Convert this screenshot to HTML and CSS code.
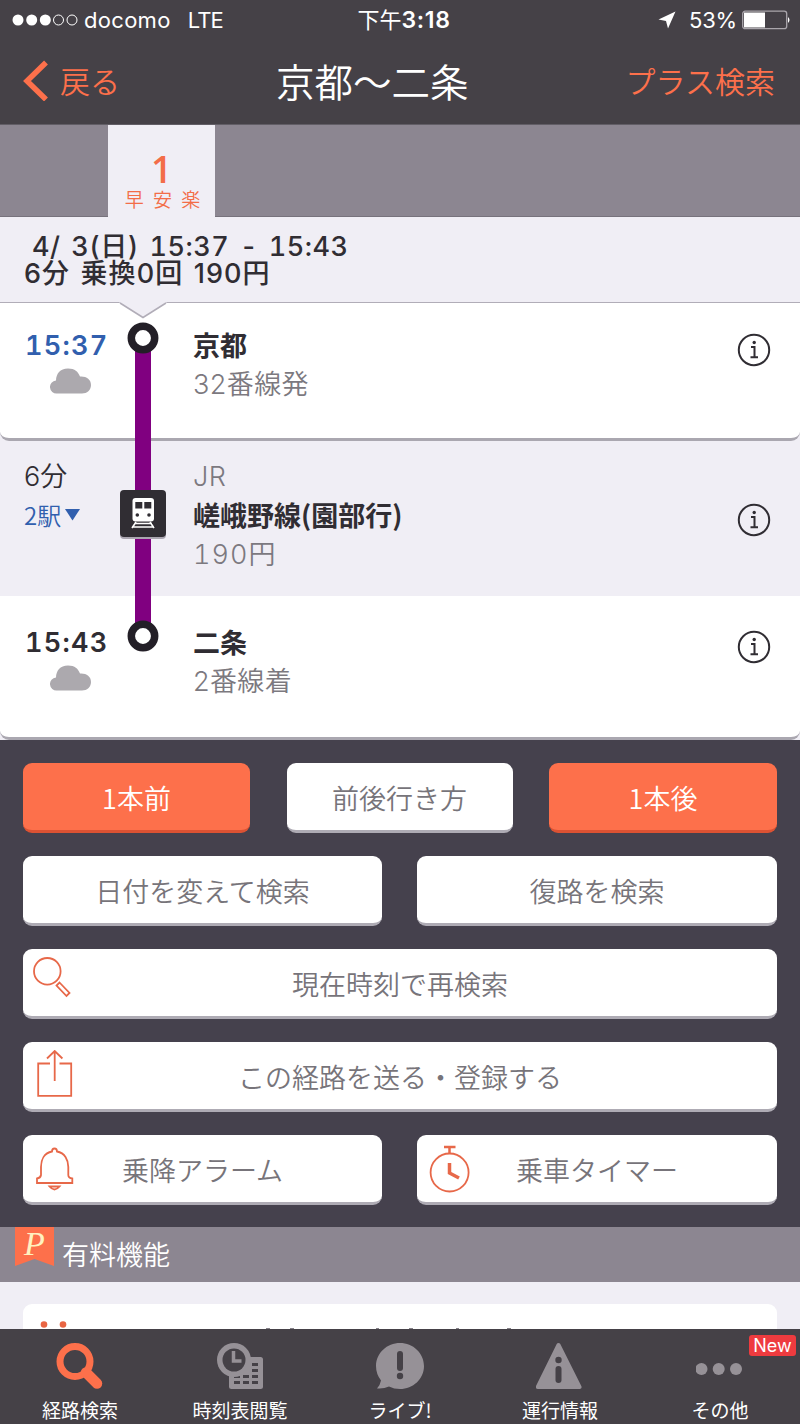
FILE: index.html
```html
<!DOCTYPE html>
<html lang="ja">
<head>
<meta charset="UTF-8">
<meta name="viewport" content="width=device-width, initial-scale=1.0">
<title>京都〜二条</title>
<link rel="stylesheet" href="styles.css">
</head>
<body>
<header class="header">
  <div class="status">
    <div class="carrier">
      <svg width="66" height="14" viewBox="0 0 66 14"><g fill="#fff"><circle cx="6" cy="7" r="5.5"/><circle cx="19.700" cy="7" r="5.500"/><circle cx="33.300" cy="7" r="5.500"/></g><g fill="none" stroke="#fff"><circle cx="46.500" cy="7" r="5"/><circle cx="60" cy="7" r="5"/></g></svg>
      <span class="docomo">docomo</span><span class="lte">LTE</span>
    </div>
    <div class="clock">下午<b>3:18</b></div>
    <div class="power">
      <svg width="18" height="18" viewBox="0 0 18 18"><path d="M17.500 .5L.5 8.500L8 10L10 17.500Z" fill="#fff"/></svg>
      <span class="percent">53%</span>
      <svg width="48" height="20" viewBox="0 0 48 20"><rect x=".7" y="1.200" width="44" height="17.500" rx="2.500" fill="none" stroke="#aaa6ac" stroke-width="1.300"/><path d="M2 2.500h21v15H2z" fill="#fff"/><path d="M46 7q3 3 0 6z" fill="#fff"/></svg>
    </div>
  </div>
  <nav class="nav">
    <a class="back"><svg width="26" height="42" viewBox="0 0 26 42"><path d="M24 3.500L5 22L24 40.500" fill="none" stroke="#fd704b" stroke-width="5.500"/></svg><span>戻る</span></a>
    <h1>京都〜二条</h1>
    <a class="plus">プラス検索</a>
  </nav>
</header>

<div class="tabs">
  <div class="tab"><span class="num">1</span><span class="tags">早 安 楽</span></div>
</div>

<section class="summary">
  <p class="when">4/ 3(日) 15:37 - 15:43</p>
  <p class="cost">6分 乗換0回 190円</p>
</section>

<section class="route">
  <div class="row first">
    <svg class="notch" width="48" height="17" viewBox="0 0 48 17"><path d="M0 0L2 1.500L24 15.500L46 1.500L48 0Z" fill="#f0eef5"/><path d="M1 1L24 15.500L47 1" fill="none" stroke="#b1adb8" stroke-width="1.500"/></svg>
    <div class="time">
      <b class="blue">15:37</b>
      <svg class="cloud" width="42" height="26" viewBox="0 0 42 26"><path d="M7 25.500a6.500 6.500 0 0 1-1-13C6 6 10 .5 18 .5c7 0 10 3 12 8C36 8 41 11 41 17c0 5-4 8.500-9 8.500z" fill="#aca9ae"/></svg>
    </div>
    <svg class="rail" width="46" height="138" viewBox="0 0 46 138"><path d="M15 36h16v102H15z" fill="#800080"/><circle cx="23" cy="35" r="11.700" fill="#fff" stroke="#231f27" stroke-width="7.500"/></svg>
    <div class="place"><b>京都</b><span>32番線発</span></div>
    <svg class="info" width="34" height="34" viewBox="0 0 34 34"><circle cx="17" cy="17" r="15.200"/><path d="M14 14h3.500v10M13.500 24.200h7.500"/><circle class="dot" cx="17.200" cy="9.500" r="1.700"/></svg>
  </div>
  <div class="row ride">
    <div class="time"><span class="min">6分</span><span class="stops">2駅<svg width="15" height="12" viewBox="0 0 15 12"><path d="M0 0h15L7.500 11.500z" fill="#315fae"/></svg></span></div>
    <svg class="rail" width="46" height="155" viewBox="0 0 46 155"><path d="M15 0h16v155H15z" fill="#800080"/><rect y="51" width="46" height="47" rx="4" fill="#aaa5b0"/><rect y="49" width="46" height="47" rx="4" fill="#302d33"/><rect x="12.500" y="57" width="21.500" height="23.500" rx="3" fill="#fff"/><path d="M15.300 61h7v6.500h-7zM24.300 61h7v6.500h-7z" fill="#302d33"/><circle cx="17.300" cy="74" r="1.800" fill="#302d33"/><circle cx="29" cy="74" r="1.800" fill="#302d33"/><path d="M16 81l-4 6M30 81l4 6M15 82.500h17M12 86h22" stroke="#fff" stroke-width="1.600"/></svg>
    <div class="place"><span>JR</span><b>嵯峨野線(園部行)</b><span class="fare">190円</span></div>
    <svg class="info" width="34" height="34" viewBox="0 0 34 34"><circle cx="17" cy="17" r="15.200"/><path d="M14 14h3.500v10M13.500 24.200h7.500"/><circle class="dot" cx="17.200" cy="9.500" r="1.700"/></svg>
  </div>
  <div class="row last">
    <div class="time">
      <b>15:43</b>
      <svg class="cloud" width="42" height="26" viewBox="0 0 42 26"><path d="M7 25.500a6.500 6.500 0 0 1-1-13C6 6 10 .5 18 .5c7 0 10 3 12 8C36 8 41 11 41 17c0 5-4 8.500-9 8.500z" fill="#aca9ae"/></svg>
    </div>
    <svg class="rail" width="46" height="60" viewBox="0 0 46 60"><path d="M15 0h16v38H15z" fill="#800080"/><circle cx="23" cy="40" r="11.700" fill="#fff" stroke="#231f27" stroke-width="7.500"/></svg>
    <div class="place"><b>二条</b><span>2番線着</span></div>
    <svg class="info" width="34" height="34" viewBox="0 0 34 34"><circle cx="17" cy="17" r="15.200"/><path d="M14 14h3.500v10M13.500 24.200h7.500"/><circle class="dot" cx="17.200" cy="9.500" r="1.700"/></svg>
  </div>
</section>

<section class="actions">
  <div class="three">
    <button class="btn orange">1本前</button>
    <button class="btn">前後行き方</button>
    <button class="btn orange">1本後</button>
  </div>
  <div class="two">
    <button class="btn">日付を変えて検索</button>
    <button class="btn">復路を検索</button>
  </div>
  <button class="btn wide"><svg class="icon" width="48" height="48" viewBox="0 0 48 48"><circle cx="17.300" cy="14.300" r="13.300"/><path d="M29.500 25.500L39.500 36L36.500 39L26.500 28.500z"/></svg><span>現在時刻で再検索</span></button>
  <button class="btn wide"><svg class="icon" width="48" height="52" viewBox="0 0 48 52"><path d="M20 13.500H8.200v32.300h33V13.500H29.500M24.700 31V1M17 8.500L24.700 1L32.400 8.500"/></svg><span>この経路を送る・登録する</span></button>
  <div class="two">
    <button class="btn iconed"><svg class="icon" width="48" height="52" viewBox="0 0 48 52"><path d="M22 8.500q0-3 2.500-3t2.500 3C35 10 38.300 17 38.300 24v8q0 3 4 3.500v4.500H7v-4.500Q10.500 35 11 32v-8C11 17 14 10 22 8.500zM19.500 43.500h10q-5 6-10 0z"/></svg><span>乗降アラーム</span></button>
    <button class="btn iconed"><svg class="icon" width="48" height="52" viewBox="0 0 48 52"><circle cx="25.600" cy="29.500" r="19"/><path d="M25.500 10V5M20 4h11.500" stroke-width="2.500"/><path d="M25.500 20v10L35 35" stroke-width="3.500"/></svg><span>乗車タイマー</span></button>
  </div>
</section>

<section class="paid">
  <h2><span class="ribbon">P</span>有料機能</h2>
  <div class="paid-body">
    <div class="paid-card"><svg width="754" height="25" viewBox="0 0 754 25"><circle cx="21" cy="20.500" r="3.300" fill="#e96543"/><circle cx="40" cy="20.500" r="3.300" fill="#e96543"/><path d="M243 24.500h4M267 24.500h4M353 24.500h3M386 24.500h4M433 24.500h3M484 24.500h4" stroke="#858188"/></svg></div>
  </div>
</section>

<footer class="tabbar">
  <a><svg width="48" height="48" viewBox="0 0 48 48"><circle cx="19" cy="19.500" r="15" fill="none" stroke="#fd704b" stroke-width="7"/><path d="M30 30.500L41 41.500" stroke="#fd704b" stroke-width="10.500" stroke-linecap="round"/></svg><span>経路検索</span></a>
  <a><svg width="48" height="48" viewBox="0 0 48 48"><rect x="13" y="15" width="34" height="32" rx="2.500" fill="#969197"/><path d="M36 22.500h6M36 28.500h6M18 34.500h6M27 34.500h6M36 34.500h6M18 40.500h6M27 40.500h6M36 40.500h6" stroke="#454147" stroke-width="3"/><circle cx="18" cy="18" r="17" fill="#969197"/><circle cx="18" cy="18" r="11.500" fill="#454147"/><path d="M17.500 9v10h8" fill="none" stroke="#969197" stroke-width="3.500"/></svg><span>時刻表閲覧</span></a>
  <a><svg width="48" height="48" viewBox="0 0 48 48"><path d="M24 1c13 0 24 10 24 23S37 47 24 47q-6 0-11-2.500Q8 47 1 46.500q3-3 4-8Q0 32 0 24C0 11 11 1 24 1z" fill="#969197"/><path d="M24 12v14" stroke="#454147" stroke-width="6" stroke-linecap="round"/><circle cx="24" cy="34" r="3.200" fill="#454147"/></svg><span>ライブ!</span></a>
  <a><svg width="48" height="48" viewBox="0 0 48 48"><path d="M22.500 3L43.500 45H1.800z" fill="#969197" stroke="#969197" stroke-width="4" stroke-linejoin="round"/><circle cx="22.500" cy="18" r="3.200" fill="#454147"/><path d="M22.500 27v11" stroke="#454147" stroke-width="6" stroke-linecap="round"/></svg><span>運行情報</span></a>
  <a><svg width="48" height="48" viewBox="0 0 48 48"><g fill="#969197"><circle cx="5.500" cy="27" r="6"/><circle cx="22.700" cy="27" r="6"/><circle cx="40" cy="27" r="6"/></g></svg><span>その他</span><em class="new">New</em></a>
</footer>
</body>
</html>
```
FILE: styles.css
```css
* { box-sizing: border-box; }
body { margin: 0; width: 800px; height: 1424px; overflow: hidden; background: #45414d;
font-family: "Noto Sans CJK JP", sans-serif; font-weight: 350; font-size: 27px; color: #302d33; }
h1, h2, p { margin: 0; font-weight: 350; }
svg { display: block; flex: none; }

.header { height: 125px; background: #454147; color: #fff; border-bottom: 1px solid #625e66; }
.status { display: grid; grid-template-columns: 1fr 1fr 1fr; height: 40px; align-items: center;
padding: 0 10px 0 12px; font: 400 22px/40px Inter, "Noto Sans CJK JP", sans-serif; }
.carrier, .power { display: flex; align-items: center; }
.docomo { margin-left: 6px; letter-spacing: .3px; }
.lte { margin-left: 17px; letter-spacing: -.8px; }
.clock { text-align: center; padding-left: 6px; }
.clock b { font-weight: 600; font-size: 23px; letter-spacing: .7px; }
.power { justify-content: flex-end; }
.percent { margin: 0 5px 0 13px; letter-spacing: -.2px; }
.nav { display: grid; grid-template-columns: 254px auto 1fr; align-items: center; height: 80px;
padding: 0 25px 0 22px; }
.nav h1 { font-size: 38.500px; line-height: 80px; }
.back { display: flex; align-items: center; gap: 12px; color: #fd704b; font-size: 30px; line-height: 80px; }
.plus { color: #fd704b; font-size: 30px; line-height: 80px; text-align: right; }

.tabs { height: 92px; background: #8c8691; padding-left: 108px; border-bottom: 1px solid #77727c; }
.tab { display: flex; flex-direction: column; align-items: center; width: 107px; height: 92px;
background: #f0eef5; color: #f36d48; padding-top: 29px; }
.num { font: 600 37px/30px "Open Sans", sans-serif; }
.tags { font-size: 19px; line-height: 19px; word-spacing: 5px; padding: 5px 0 0 2px; }

.summary { height: 86px; background: #f0eef5; border-bottom: 1px solid #b1adb8;
padding: 16px 24px; line-height: 27px; }
.when, .cost { font-family: Inter, "Noto Sans CJK JP", sans-serif; font-weight: 500; white-space: nowrap; }
.when { padding-left: 8px; font-variant-numeric: tabular-nums; letter-spacing: .5px; word-spacing: 3px; }
.cost { letter-spacing: 1.100px; word-spacing: 2px; }

.route { background: #f0eef5; }
.row { display: grid; grid-template-columns: 120px 46px 1fr 34px; align-items: start; position: relative;
padding-right: 29px; background: #fff; }
.first { height: 138px; padding-top: 22px; border-bottom: 3px solid #aaa7b0; border-radius: 0 0 9px 9px; }
.ride { height: 155px; padding-top: 15px; background: #f0eef5; }
.last { height: 144px; padding-top: 26px; border-bottom: 3px solid #aaa7b0; border-radius: 0 0 9px 9px; }
.notch { position: absolute; left: 119px; top: -1px; z-index: 2; }
.rail { position: absolute; left: 120px; top: 0; z-index: 1; }
.time { grid-column: 1; padding-left: 24px; line-height: 39px; }
.time b { display: block; padding-left: 1px; font: 600 27px/41px Inter, sans-serif; font-variant-numeric: tabular-nums; letter-spacing: 1.300px; }
.blue { color: #315fae; }
.cloud { margin: 2px 0 0 26px; }
.min, .place span { height: 39px; padding-top: 1px; font-family: Inter, "Noto Sans CJK JP", sans-serif; font-weight: 350; }
.min { display: block; }
.stops { display: flex; align-items: center; gap: 4px; color: #315fae; font-size: 24px; }
.place { grid-column: 3; padding-left: 27px; line-height: 39px; }
.place b, .place span { display: block; }
.place b { font-weight: 700; }
.place span { color: #7c797f; letter-spacing: .4px; }
.place .fare { font-variant-numeric: tabular-nums; letter-spacing: 1px; }
.info { grid-column: 4; margin-top: 8px; fill: none; stroke: #302d33; stroke-width: 2; }
.info .dot { fill: #302d33; stroke: none; }
.ride .info { margin-top: 47px; }

.actions { display: flex; flex-direction: column; gap: 23px; height: 487px; padding: 23px 23px 0; }
.three { display: grid; grid-template-columns: 227px 226px 228px; justify-content: space-between; }
.two { display: grid; grid-template-columns: 359px 360px; justify-content: space-between; }
.btn { display: block; position: relative; height: 70px; padding: 1px 0 0; border: 0; border-bottom: 3px solid #aeabb4;
border-radius: 9px; background: #fff; color: #77747a; font: inherit; text-align: center; }
.orange { background: #fd704b; color: #fff; border-color: #dc5233; }
.icon { position: absolute; left: 7px; top: 8px; fill: none; stroke: #e76849; stroke-width: 1.800; }

.paid h2 { display: flex; height: 55px; background: #8c8691; color: #fff; padding-left: 15px;
font-size: 27px; line-height: 53px; gap: 8px; }
.ribbon { width: 39px; height: 39px; background: #fd704b; clip-path: polygon(0 0, 100% 0, 100% 100%, 50% 82%, 0 100%);
font: italic 400 34px/33px "Liberation Serif", serif; color: #fff2c0; text-align: center; }
.paid-body { height: 47px; padding: 22px 23px 0; background: #f0eef5; }
.paid-card { height: 25px; background: #fff; border-radius: 9px 9px 0 0; }

.tabbar { display: grid; grid-template-columns: repeat(5, 160px); height: 95px; background: #454147; color: #fff; }
.tabbar a { display: flex; flex-direction: column; align-items: center; position: relative; padding-top: 13px;
font-size: 19px; line-height: 24px; gap: 8px; font-weight: 400; }
.new { position: absolute; right: 4px; top: 6px; width: 47px; height: 21px; border-radius: 3px; background: #ee3b3f;
font: 400 18px/21px Inter, sans-serif; text-align: center; }
```
